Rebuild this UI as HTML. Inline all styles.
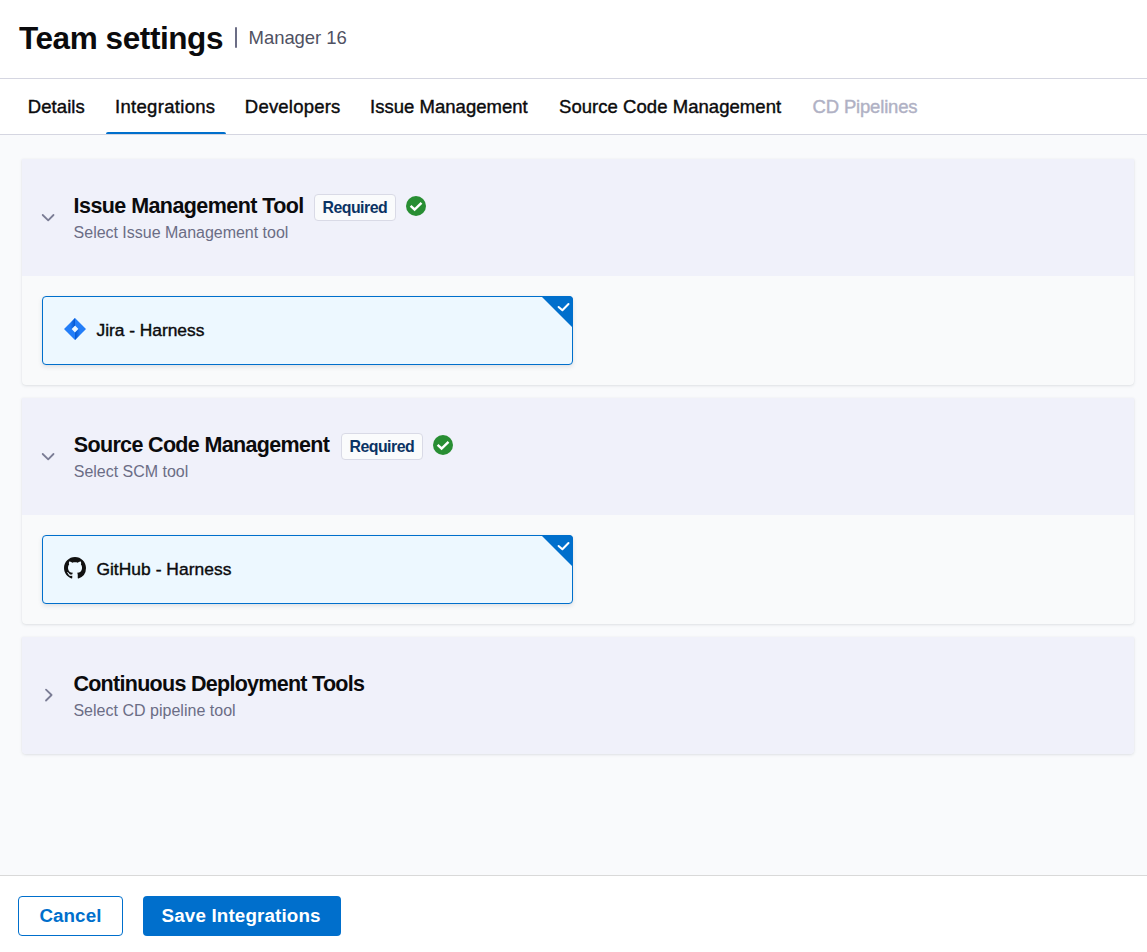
<!DOCTYPE html>
<html>
<head>
<meta charset="utf-8">
<title>Team settings</title>
<style>
* { box-sizing: border-box; margin: 0; padding: 0; }
html, body { width: 1147px; height: 952px; overflow: hidden; background: #fff; }
body { font-family: "Liberation Sans", sans-serif; position: relative; }
.t { position: absolute; white-space: nowrap; line-height: 1; }
.b { position: absolute; }
.ic { position: absolute; display: block; }
.blk { color: #0b0b0d; }
.reg { -webkit-text-stroke: 0.4px currentColor; }
.bold { font-weight: bold; }
.sub { color: #6b6d85; }

.dis { color: #b0b1c4; }
#mgr { color: #4f5162; }
.card { background: #f9fafb; border-radius: 0 0 4px 4px; box-shadow: 0 0 1px rgba(40,41,61,.08), 0 1px 3px rgba(96,97,112,.16); overflow: hidden; }
.chead { position: absolute; left: 0; top: 0; right: 0; height: 117px; background: #f0f1fa; }
.tag { border: 1px solid #d9dae6; background: #fafbfc; border-radius: 4px; }
.req { color: #0a3364; }
.sel { border: 1px solid #006fcc; border-radius: 4px; background: #edf8ff; box-shadow: 0 0 1px rgba(40,41,61,.04), 0 2px 4px rgba(96,97,112,.16); }
.btxt { color: #006fcc; }
.wtxt { color: #fff; }
</style>
</head>
<body>
<div class="b" style="left:0;top:78px;width:1147px;height:1px;background:#d5d6e1"></div>
<div id="title" class="t bold blk" style="left:19.00px;top:22.60px;font-size:31.5px;letter-spacing:-0.417px">Team settings</div>
<div class="b" style="left:235px;top:27px;width:2px;height:21px;background:#6b6d85;border-radius:1px"></div>
<div id="mgr" class="t " style="left:248.60px;top:29.00px;font-size:18.5px;letter-spacing:-0.067px">Manager 16</div>
<div class="b" style="left:0;top:134px;width:1147px;height:1px;background:#d5d6e1"></div>
<div id="tab1" class="t blk reg" style="left:27.80px;top:98.00px;font-size:18.5px;letter-spacing:0.067px">Details</div>
<div id="tab2" class="t blk reg" style="left:115.00px;top:98.00px;font-size:18.5px;letter-spacing:0.309px">Integrations</div>
<div id="tab3" class="t blk reg" style="left:244.80px;top:98.00px;font-size:18.5px;letter-spacing:0.222px">Developers</div>
<div id="tab4" class="t blk reg" style="left:370.00px;top:98.00px;font-size:18.5px;letter-spacing:0.027px">Issue Management</div>
<div id="tab5" class="t blk reg" style="left:559.00px;top:98.00px;font-size:18.5px;letter-spacing:0.048px">Source Code Management</div>
<div id="tab6" class="t reg dis" style="left:812.60px;top:98.00px;font-size:18.5px;letter-spacing:-0.182px">CD Pipelines</div>
<div class="b" style="left:105.5px;top:132px;width:120px;height:2px;background:#006fcc;border-radius:2px 2px 0 0"></div>
<div class="b" style="left:0;top:135px;width:1147px;height:740px;background:#f9fafc"></div>

<div class="b card" style="left:22px;top:159px;width:1112px;height:226px"><div class="chead"></div></div>
<div class="b card" style="left:22px;top:398px;width:1112px;height:226px"><div class="chead"></div></div>
<div class="b card" style="left:22px;top:637px;width:1112px;height:117px"><div class="chead"></div></div>

<svg class="ic" style="left:41px;top:212.5px" width="14" height="10" viewBox="0 0 14 10"><path d="M1.7 2 L7.2 7.4 L12.5 2" fill="none" stroke="#7b7d95" stroke-width="1.8" stroke-linecap="round" stroke-linejoin="round"/></svg>
<div id="c1t" class="t bold blk" style="left:73.60px;top:196.40px;font-size:21.5px;letter-spacing:-0.570px">Issue Management Tool</div>
<div id="c1s" class="t sub" style="left:73.60px;top:225.30px;font-size:16px;letter-spacing:-0.019px">Select Issue Management tool</div>
<div class="b tag" style="left:314px;top:194px;width:82px;height:27px"></div>
<div id="rq1" class="t bold req" style="left:322.50px;top:200.20px;font-size:15.9px;letter-spacing:-0.529px">Required</div>
<svg class="ic" style="left:406px;top:196px" width="20" height="20" viewBox="0 0 20 20"><circle cx="10" cy="10" r="10" fill="#288e33"/><path d="M4.6 9.8 L8.6 13.5 L15.5 6.8" fill="none" stroke="#fff" stroke-width="2.4" stroke-linecap="butt" stroke-linejoin="miter"/></svg>
<div class="b sel" style="left:42px;top:296px;width:531px;height:69px"></div>
<svg class="ic" style="left:541px;top:296px" width="32" height="32" viewBox="0 0 32 32"><path d="M0 0 H28 A4 4 0 0 1 32 4 V32 Z" fill="#006fcc"/><path d="M17.6 11 L21.4 14.3 L27.5 8" fill="none" stroke="#fff" stroke-width="2" stroke-linecap="round" stroke-linejoin="round"/></svg>
<svg class="ic" style="left:64.2px;top:318px" width="22" height="22" viewBox="0 0 22 22">
<defs>
<linearGradient id="jg1" x1="6" y1="0" x2="11" y2="0" gradientUnits="userSpaceOnUse"><stop offset="0" stop-color="#0052cc" stop-opacity="0"/><stop offset="1" stop-color="#0052cc" stop-opacity="0.9"/></linearGradient>
<linearGradient id="jg2" x1="16" y1="0" x2="11" y2="0" gradientUnits="userSpaceOnUse"><stop offset="0" stop-color="#0052cc" stop-opacity="0"/><stop offset="1" stop-color="#0052cc" stop-opacity="0.9"/></linearGradient>
</defs>
<path d="M11 0 L22 11 L11 22 L0 11 Z M11 7.6 L7.6 11 L11 14.4 L14.4 11 Z" fill="#237ef8" fill-rule="evenodd"/>
<path d="M0 11 L11 0 L11 7.6 L7.6 11 Z" fill="url(#jg1)"/>
<path d="M11 22 L22 11 L14.4 11 L11 14.4 Z" fill="url(#jg2)"/>
</svg>
<div id="n1" class="t blk reg" style="left:96.60px;top:322.00px;font-size:17.4px;letter-spacing:-0.038px">Jira - Harness</div>

<svg class="ic" style="left:41px;top:451.5px" width="14" height="10" viewBox="0 0 14 10"><path d="M1.7 2 L7.2 7.4 L12.5 2" fill="none" stroke="#7b7d95" stroke-width="1.8" stroke-linecap="round" stroke-linejoin="round"/></svg>
<div id="c2t" class="t bold blk" style="left:73.80px;top:435.40px;font-size:21.5px;letter-spacing:-0.662px">Source Code Management</div>
<div id="c2s" class="t sub" style="left:73.80px;top:464.30px;font-size:16px;letter-spacing:-0.021px">Select SCM tool</div>
<div class="b tag" style="left:341px;top:433px;width:82px;height:27px"></div>
<div id="rq2" class="t bold req" style="left:349.50px;top:439.20px;font-size:15.9px;letter-spacing:-0.529px">Required</div>
<svg class="ic" style="left:433px;top:435px" width="20" height="20" viewBox="0 0 20 20"><circle cx="10" cy="10" r="10" fill="#288e33"/><path d="M4.6 9.8 L8.6 13.5 L15.5 6.8" fill="none" stroke="#fff" stroke-width="2.4" stroke-linecap="butt" stroke-linejoin="miter"/></svg>
<div class="b sel" style="left:42px;top:535px;width:531px;height:69px"></div>
<svg class="ic" style="left:541px;top:535px" width="32" height="32" viewBox="0 0 32 32"><path d="M0 0 H28 A4 4 0 0 1 32 4 V32 Z" fill="#006fcc"/><path d="M17.6 11 L21.4 14.3 L27.5 8" fill="none" stroke="#fff" stroke-width="2" stroke-linecap="round" stroke-linejoin="round"/></svg>
<svg class="ic" style="left:64px;top:557px" width="22" height="22" viewBox="0 0 16 16"><path fill="#111" d="M8 0C3.58 0 0 3.58 0 8c0 3.54 2.29 6.53 5.47 7.59.4.07.55-.17.55-.38 0-.19-.01-.82-.01-1.49-2.01.37-2.53-.49-2.69-.94-.09-.23-.48-.94-.82-1.13-.28-.15-.68-.52-.01-.53.63-.01 1.08.58 1.23.82.72 1.21 1.87.87 2.33.66.07-.52.28-.87.51-1.07-1.78-.2-3.64-.89-3.64-3.95 0-.87.31-1.59.82-2.15-.08-.2-.36-1.02.08-2.12 0 0 .67-.21 2.2.82.64-.18 1.32-.27 2-.27.68 0 1.36.09 2 .27 1.53-1.04 2.2-.82 2.2-.82.44 1.1.16 1.92.08 2.12.51.56.82 1.27.82 2.15 0 3.07-1.87 3.75-3.65 3.95.29.25.54.73.54 1.48 0 1.07-.01 1.93-.01 2.2 0 .21.15.46.55.38A8.013 8.013 0 0016 8c0-4.42-3.58-8-8-8z"/></svg>
<div id="n2" class="t blk reg" style="left:96.40px;top:561.00px;font-size:17.4px;letter-spacing:0.040px">GitHub - Harness</div>

<svg class="ic" style="left:43.6px;top:688px" width="10" height="14" viewBox="0 0 10 14"><path d="M2 1.6 L7.6 7 L2 12.5" fill="none" stroke="#7b7d95" stroke-width="1.8" stroke-linecap="round" stroke-linejoin="round"/></svg>
<div id="c3t" class="t bold blk" style="left:73.40px;top:673.70px;font-size:21.5px;letter-spacing:-0.715px">Continuous Deployment Tools</div>
<div id="c3s" class="t sub" style="left:73.40px;top:703.30px;font-size:16px;letter-spacing:0.018px">Select CD pipeline tool</div>

<div class="b" style="left:0;top:875px;width:1147px;height:1px;background:#d9d9d9"></div>
<div class="b" style="left:18px;top:896px;width:105px;height:40px;border:1px solid #006fcc;border-radius:4px;background:#fff"></div>
<div id="b1" class="t bold btxt" style="left:39.40px;top:907.00px;font-size:18.8px;letter-spacing:0.080px">Cancel</div>
<div class="b" style="left:143px;top:896px;width:198px;height:40px;border-radius:4px;background:#006fcc"></div>
<div id="b2" class="t bold wtxt" style="left:161.60px;top:907.00px;font-size:18.8px;letter-spacing:0.150px">Save Integrations</div>
</body>
</html>
